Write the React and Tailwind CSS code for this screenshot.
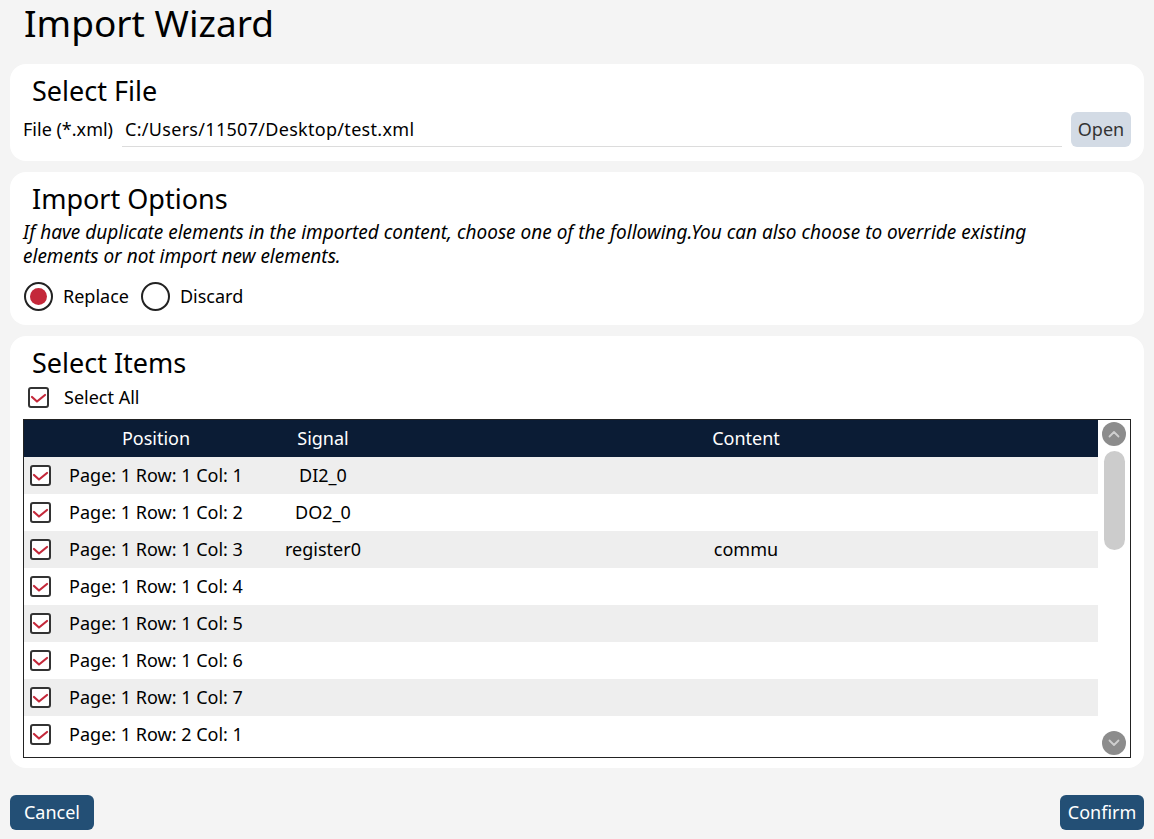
import { useState } from 'react'

const rows = [
  { pos: 'Page: 1 Row: 1 Col: 1', signal: 'DI2_0', content: '' },
  { pos: 'Page: 1 Row: 1 Col: 2', signal: 'DO2_0', content: '' },
  { pos: 'Page: 1 Row: 1 Col: 3', signal: 'register0', content: 'commu' },
  { pos: 'Page: 1 Row: 1 Col: 4', signal: '', content: '' },
  { pos: 'Page: 1 Row: 1 Col: 5', signal: '', content: '' },
  { pos: 'Page: 1 Row: 1 Col: 6', signal: '', content: '' },
  { pos: 'Page: 1 Row: 1 Col: 7', signal: '', content: '' },
  { pos: 'Page: 1 Row: 2 Col: 1', signal: '', content: '' },
]

function Check() {
  return (
    <svg width="21" height="21" viewBox="0 0 21 21" fill="none" className="shrink-0">
      <rect x="1" y="1" width="19" height="19" rx="2" fill="white" stroke="#333" strokeWidth="2" />
      <path d="M4 10 L9 14.5 L17 8" stroke="#c4283a" strokeWidth="2.2" strokeLinecap="round" strokeLinejoin="round" />
    </svg>
  )
}

function Radio({ on }) {
  return (
    <span className="flex h-[29px] w-[29px] items-center justify-center rounded-full border-[2.5px] border-[#222]">
      {on && <span className="h-[17px] w-[17px] rounded-full bg-[#c4283a]" />}
    </span>
  )
}

function ScrollBtn({ down }) {
  return (
    <span className="flex h-[24px] w-[24px] items-center justify-center rounded-full bg-[#8c8c8c]">
      <svg width="12" height="8" viewBox="0 0 12 8" fill="none">
        <path d={down ? 'M1.5 1.5 L6 6 L10.5 1.5' : 'M1.5 6.5 L6 2 L10.5 6.5'} stroke="#cfcfcf" strokeWidth="1.8" strokeLinecap="round" strokeLinejoin="round" />
      </svg>
    </span>
  )
}

export default function App() {
  const [mode, setMode] = useState('replace')

  return (
    <div className="flex h-[839px] w-[1154px] flex-col bg-[#f4f4f4] px-[10px] text-black" style={{ fontFamily: '"Noto Sans", "Open Sans", sans-serif' }}>
      <h1 className="pl-[14px] pt-[2px] text-[37px] leading-[42px]">Import Wizard</h1>

      <div className="mt-[20px] flex h-[97px] flex-col rounded-[16px] bg-white px-[13px]">
        <h2 className="pl-[9px] pt-[10px] text-[27px] leading-[34px]">Select File</h2>
        <div className="mt-[4px] flex items-center">
          <span className="text-[18px]">File (*.xml)</span>
          <div className="ml-[9px] flex h-[35px] flex-1 items-center border-b border-[#dcdcdc] pl-[3px] text-[18px] tracking-[0.3px]">C:/Users/11507/Desktop/test.xml</div>
          <button className="ml-[9px] h-[35px] w-[60px] rounded-[6px] bg-[#d3dbe5] text-[18px] text-[#333]">Open</button>
        </div>
      </div>

      <div className="mt-[11px] flex h-[153px] flex-col rounded-[16px] bg-white px-[13px]">
        <h2 className="pl-[9px] pt-[10px] text-[27px] leading-[34px]">Import Options</h2>
        <p className="mt-[4px] max-w-[1045px] text-[19px] italic leading-[24px]">
          If have duplicate elements in the imported content, choose one of the following.You can also choose to override existing elements or not import new elements.
        </p>
        <div className="mt-[14px] flex items-center pl-[1px]">
          <button onClick={() => setMode('replace')} className="flex items-center gap-[10px]">
            <Radio on={mode === 'replace'} />
            <span className="text-[18px]">Replace</span>
          </button>
          <button onClick={() => setMode('discard')} className="ml-[12px] flex items-center gap-[10px]">
            <Radio on={mode === 'discard'} />
            <span className="text-[18px]">Discard</span>
          </button>
        </div>
      </div>

      <div className="mt-[11px] flex h-[432px] flex-col rounded-[16px] bg-white px-[13px]">
        <h2 className="pl-[9px] pt-[10px] text-[27px] leading-[34px]">Select Items</h2>
        <div className="mt-[4px] flex items-center gap-[15px] pl-[5px]">
          <Check />
          <span className="text-[18px]">Select All</span>
        </div>
        <div className="mt-[8px] flex h-[339px] border border-[#222]">
          <div className="flex flex-1 flex-col overflow-hidden">
            <div className="flex h-[37px] shrink-0 items-center bg-[#0b1c35] text-[18px] text-white">
              <span className="w-[36px]" />
              <span className="w-[192px] text-center">Position</span>
              <span className="w-[142px] text-center">Signal</span>
              <span className="flex-1 text-center">Content</span>
            </div>
            {rows.map((r, i) => (
              <div key={i} className={`flex h-[37px] shrink-0 items-center text-[18px] ${i % 2 === 0 ? 'bg-[#eeeeee]' : 'bg-white'}`}>
                <span className="flex w-[36px] justify-start pl-[6px]"><Check /></span>
                <span className="w-[192px] text-center">{r.pos}</span>
                <span className="w-[142px] text-center">{r.signal}</span>
                <span className="flex-1 text-center">{r.content}</span>
              </div>
            ))}
          </div>
          <div className="flex w-[32px] flex-col items-center justify-between py-[2px]">
            <div className="flex flex-col items-center gap-[5px]">
              <ScrollBtn />
              <span className="h-[99px] w-[21px] rounded-full bg-[#cccccc]" />
            </div>
            <ScrollBtn down />
          </div>
        </div>
      </div>

      <div className="mt-[27px] flex justify-between">
        <button className="h-[35px] w-[84px] rounded-[6px] bg-[#234f75] text-[18px] text-white">Cancel</button>
        <button className="h-[35px] w-[84px] rounded-[6px] bg-[#234f75] text-[18px] text-white">Confirm</button>
      </div>
    </div>
  )
}
